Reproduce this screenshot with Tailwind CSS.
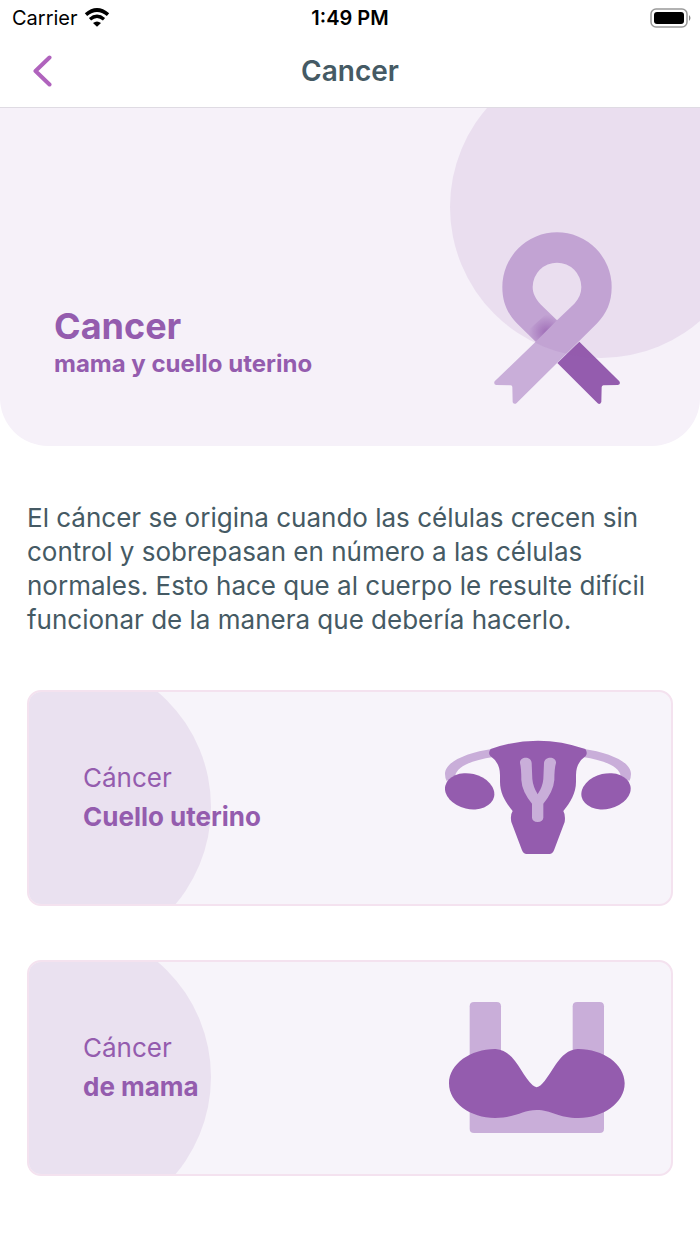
<!DOCTYPE html>
<html lang="es">

<head>
    <meta charset="UTF-8">
    <meta name="viewport" content="width=device-width, initial-scale=1.0">
    <title>Cancer</title>
    <script src="https://cdn.jsdelivr.net/npm/@tailwindcss/browser@4"></script>
</head>

<body class="bg-white font-[Inter,sans-serif] text-[#455a64]">
    <!-- Status bar -->
    <div class="grid grid-cols-3 items-center h-9 px-2 text-black text-xl">
        <div class="flex items-center gap-1.5 pl-1">
            <span>Carrier</span>
            <svg class="w-[26px] h-5" viewBox="0 0 78 60">
                <path d="M6 20 Q39 -8 72 20" fill="none" stroke="#000" stroke-width="11" />
                <path d="M18 34 Q39 16 60 34" fill="none" stroke="#000" stroke-width="10" />
                <path d="M39 56 L27 45 Q39 36 51 45 Z" />
            </svg>
        </div>
        <span class="text-center font-semibold">1:49 PM</span>
        <svg class="w-[42px] h-5 justify-self-end" viewBox="0 0 42 20">
            <rect x="1" y="1" width="36" height="18" rx="5" fill="none" stroke="#999" stroke-width="1.5" />
            <rect x="4" y="4" width="30" height="12" rx="3" />
            <path d="M39 7 Q42 10 39 13 Z" fill="#888" />
        </svg>
    </div>

    <!-- Header -->
    <header class="grid grid-cols-3 items-center h-[72px] pb-px px-8 border-b border-[#dfdbe3]">
        <button type="button" aria-label="Volver" class="justify-self-start">
            <svg class="w-5 h-8" viewBox="0 0 20 32" fill="none" stroke="#b063bd" stroke-width="4"
                stroke-linecap="round" stroke-linejoin="round">
                <path d="M17.5 2.5 L3.5 16 L17.5 29.5" />
            </svg>
        </button>
        <h1 class="text-center text-[28px] font-semibold">Cancer</h1>
    </header>

    <main>
        <!-- Hero -->
        <section
            class="relative overflow-hidden flex justify-between items-end h-[338px] pl-[54px] pr-20 rounded-b-[48px] bg-[#f6f1f9]">
            <div class="pb-[66px] text-[#945cae] font-bold">
                <h2 class="text-4xl leading-[44px]">Cancer</h2>
                <p class="text-2xl">mama y cuello uterino</p>
            </div>
            <svg class="w-[126px] h-[172px] mb-[42px]" viewBox="42 35 378 516">
                <defs>
                    <radialGradient id="fold" gradientUnits="userSpaceOnUse" cx="200" cy="336" r="54">
                        <stop offset="0" stop-color="#945cae" stop-opacity=".75" />
                        <stop offset="1" stop-color="#945cae" stop-opacity="0" />
                    </radialGradient>
                </defs>
                <path fill="#945cae"
                    d="M298 364 L418 483 Q423 491 414 494 L370 495 Q365 496 365 501 L364 545 Q360 554 353 549 L232 428 Z" />
                <path fill="#c9aed9" fill-rule="evenodd"
                    d="M167 364 L112 310 C82 280 67 245 67 200 A164 164 0 0 1 395 200 C395 245 380 280 350 310 L110 548 Q103 554 98 546 L97 500 Q97 495 92 495 L48 494 Q40 491 44 483 Z M231 300 L283 250 C297 235 304 218 304 200 A73 73 0 0 0 158 200 C158 218 166 235 183 253 Z" />
                <path fill="url(#fold)" d="M205 275 L231 300 L167 364 L138 336 Z" />
            </svg>
            <div class="absolute -top-[52px] -right-[52px] size-[302px] rounded-full bg-[#945cae]/12"></div>
        </section>

        <p class="px-[27px] pt-[55px] text-[26px] leading-[34px]">El cáncer se origina cuando las células crecen sin
            control y sobrepasan en número a las células normales. Esto hace que al cuerpo le resulte difícil funcionar
            de la manera que debería hacerlo.</p>

        <!-- Cards -->
        <div class="flex flex-col gap-[54px] px-[27px] pt-[53px] pb-16">
            <a href="#"
                class="relative overflow-hidden flex justify-between items-center h-[216px] pl-[54px] pr-10 pb-0.5 rounded-[14px] border-2 border-[#f4e2ef] bg-[#f7f4fa] text-[#945cae] text-[26px]">
                <span class="absolute -top-9 -left-[120px] size-[302px] rounded-full bg-[#eae1f0]"></span>
                <span class="relative leading-[39px]">Cáncer<br><b>Cuello uterino</b></span>
                <svg class="w-[186px] h-[114px]" viewBox="45 45 558 342">
                    <g fill="#c9aed9">
                        <path d="M190 71 C105 83 45 112 45 147 Q45 158 50 168 L76 152 C80 125 125 106 190 96 Z" />
                        <path d="M458 71 C543 83 603 112 603 147 Q603 158 598 168 L572 152 C568 125 523 106 458 96 Z" />
                    </g>
                    <g fill="#945cae">
                        <ellipse cx="119" cy="199" rx="75" ry="53" transform="rotate(13 119 199)" />
                        <ellipse cx="528" cy="199" rx="75" ry="53" transform="rotate(-13 528 199)" />
                        <path
                            d="M182 72 Q324 22 466 72 Q474 84 467 93 Q438 113 438 150 L438 170 C438 205 421 232 400 258 Q407 270 404 291 L372 376 Q368 387 358 387 L290 387 Q280 387 276 376 L244 291 Q240 270 248 258 C227 232 210 205 210 170 L210 150 Q210 113 181 93 Q173 84 182 72 Z" />
                    </g>
                    <path
                        d="M270 114 C268 94 304 92 305 114 L307 162 Q309 185 323 208 Q338 185 340 162 L342 114 C344 92 380 94 378 114 Q373 130 373 165 Q370 200 340 236 L340 278 Q339 290 323 291 Q307 290 306 278 L306 236 Q276 200 274 165 Q274 130 270 114 Z"
                        fill="#c9aed9" />
                </svg>
            </a>
            <a href="#"
                class="relative overflow-hidden flex justify-between items-center h-[216px] pl-[54px] pr-[46px] pb-0.5 rounded-[14px] border-2 border-[#f4e2ef] bg-[#f7f4fa] text-[#945cae] text-[26px]">
                <span class="absolute -top-9 -left-[120px] size-[302px] rounded-full bg-[#eae1f0]"></span>
                <span class="relative leading-[39px]">Cáncer<br><b>de mama</b></span>
                <svg class="w-44 h-[131px]" viewBox="58 50 528 393">
                    <g fill="#c9aed9">
                        <path d="M120 230 V63 Q120 50 133 50 H201 Q214 50 214 63 V230 Z" />
                        <path d="M429 230 V63 Q429 50 442 50 H510 Q523 50 523 63 V230 Z" />
                        <path d="M120 340 H523 V430 Q523 443 510 443 H133 Q120 443 120 430 Z" />
                    </g>
                    <path
                        d="M58 294 C58 235 125 190 198 191 C255 194 275 270 309 300 Q321 311 333 300 C367 270 387 194 444 191 C518 190 585 235 585 294 C585 353 520 398 447 398 C385 398 365 374 321 374 C278 374 258 398 196 398 C123 398 58 353 58 294 Z"
                        fill="#945cae" />
                </svg>
            </a>
        </div>
    </main>
</body>

</html>
